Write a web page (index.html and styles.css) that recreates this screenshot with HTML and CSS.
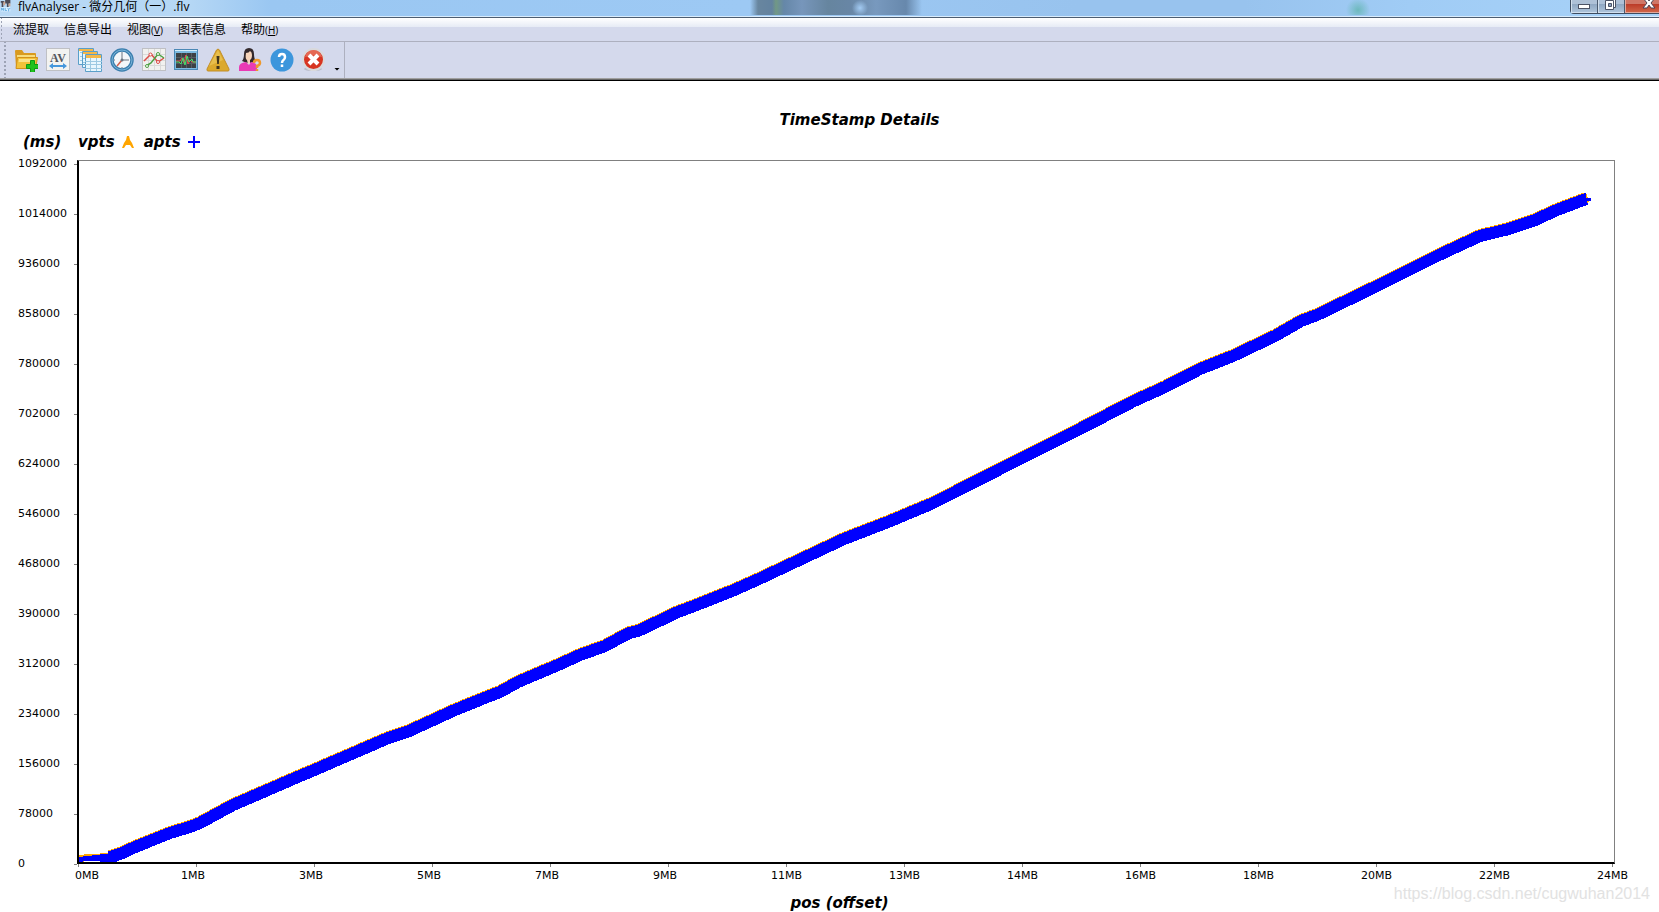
FILE: index.html
```html
<!DOCTYPE html>
<html lang="zh-CN">
<head>
<meta charset="utf-8">
<title>flvAnalyser</title>
<link rel="stylesheet" href="styles.css">
</head>
<body>
<header class="titlebar">
  <svg class="app-icon" viewBox="0 0 12 16" aria-hidden="true"><path fill="#4b4b55" d="M0 1h4v2H0zM5 0h6v4H9v5H7V4H5zM1 3h2v5H1z"/><path fill="#cfa58d" d="M3 2h2v4H3zM9 4h2v3H9z"/><path fill="#d8efff" d="M0 8h11v5H0z"/><path stroke="#5ba7dc" fill="none" d="M1 12V9l2 3V9M5 9v3h2M8 9l1 2 2-2M9 11v2"/></svg>
  <h1 class="title">flvAnalyser - 微分几何（一）.flv</h1>
  <div class="glass" aria-hidden="true"></div>
  <div class="window-buttons">
    <button class="wb" aria-label="Minimize"><svg width="14" height="14"><rect x="1.500" y="4.500" width="11" height="4" fill="#fff" stroke="#4c5365"/></svg></button>
    <button class="wb" aria-label="Restore"><svg width="14" height="14"><path d="M4.500-1.500h7v9h-7z" fill="#fff" stroke="#4c5365"/><path d="M1.500.5h8v9h-8z" fill="#fff" stroke="#4c5365"/><path d="M4.500 3.500h3v3h-3z" fill="#8aa0be" stroke="#4c5365"/></svg></button>
    <button class="wb wb-close" aria-label="Close"><svg width="14" height="14"><path d="M1-2h4l2 3 2-3h4L9 3l4 5H9L7 5 5 8H1l4-5z" fill="#fff" stroke="#4c4555"/></svg></button>
  </div>
</header>
<nav class="menubar">
  <button>流提取</button>
  <button>信息导出</button>
  <button>视图<span class="key">(<u>V</u>)</span></button>
  <button>图表信息</button>
  <button>帮助<span class="key">(<u>H</u>)</span></button>
</nav>
<div class="toolbar">
  <div class="tools">
    <button aria-label="Open"><svg viewBox="0 0 24 24"><path fill="#d99a1e" d="M1 3q0-1 1-1h6l2 3h11q1 0 1 1v14H2z"/><path fill="#f7dd7c" d="M3 7h18v3H3z"/><path fill="#f2c23a" stroke="#d3921a" d="M3.500 9.500h20l-2 11H2z"/><path fill="#fbe28a" d="M5 11h16l-.5 3H4.500z"/><path fill="#1fc21d" stroke="#0c9a14" d="M16.500 12.500h4v4h4v4h-4v4h-4v-4h-4v-4h4z"/></svg></button>
    <button aria-label="Audio and video"><svg viewBox="0 0 24 24"><rect x=".5" y=".5" width="23" height="22" fill="#f3f3f1" stroke="#bfc0c4"/><text x="12" y="14" text-anchor="middle" class="av">AV</text><path fill="none" stroke="#4597dc" d="M5 17.500h14M5 18.500h14"/><path fill="#4597dc" d="M3 18l4-3v6zM21 18l-4-3v6z"/></svg></button>
    <button aria-label="Tables"><svg viewBox="0 0 24 24"><g stroke="#5a9fc9"><path fill="#e7f6fd" d="M.5.5h15v16H.5zM4.500 3.500h15v16h-15z"/><path fill="#e7f6fd" d="M7.500 6.500h16v17h-16z"/><path d="M7 13.500h17M7 16.500h17M7 20.500h17M12.500 7v16M18.500 7v16M2 4.500h2M2 8.500h2M2 12.500h2M5 10.500h2M5 14.500h2" stroke="#9cc9e2"/></g><path fill="#f3b749" d="M1 1h14v2H1zM5 4h14v2H5zM8 7h15v3H8z"/></svg></button>
    <button aria-label="Timestamps"><svg viewBox="0 0 24 24"><circle cx="12" cy="12" r="10" fill="#f4f7fa" stroke="#3c7fae" stroke-width="3.500"/><circle cx="12" cy="12" r="10" fill="none" stroke="#7ab5da"/><path stroke="#6b7480" fill="none" d="M12 4v8h7M12 19v1M4 12h1"/><path stroke="#d2604d" stroke-width="1.500" d="M12 12l-5 6"/><circle cx="12" cy="12" r="1.500" fill="#6b7480"/></svg></button>
    <button aria-label="Chart"><svg viewBox="0 0 24 24"><rect x=".5" y=".5" width="23" height="22" fill="#f1f1ef" stroke="#bfc0c4"/><path stroke="#dadada" d="M6.500 1v21M12.500 1v21M18.500 1v21M1 6.500h22M1 12.500h22M1 17.500h22"/><path fill="none" stroke="#dc4d48" stroke-width="1.500" d="M2 13l7-7 7 8 6-4"/><path fill="none" stroke="#4ea143" stroke-width="1.500" d="M4 18l5-3 7-9 6 4"/><g fill="#fff" stroke="#dc4d48"><circle cx="8.500" cy="6.500" r="1.500"/><circle cx="16" cy="14" r="1.500"/></g><g fill="#fff" stroke="#4ea143"><circle cx="5" cy="18" r="1.500"/><circle cx="16" cy="6" r="1.500"/></g></svg></button>
    <button aria-label="Monitor"><svg viewBox="0 0 24 24"><rect x=".5" y="1.500" width="23" height="20" fill="#7cb9df" stroke="#4b88b5"/><path fill="#d5eefb" d="M1 2h22v1H1z"/><path fill="#3c4044" d="M2 5h20v15H2z"/><path stroke="#555c60" d="M7.500 5v15M12.500 5v15M17.500 5v15M2 9.500h20M2 15.500h20"/><path fill="none" stroke="#e94d50" d="M2 13h4l2-3 2 5 2-8 2 9 2-4 2 2h4"/><path fill="none" stroke="#45e06a" d="M2 14h3l2 2 2-6 2 7 2-9 2 6 3-3 1 3h3"/></svg></button>
    <button aria-label="Warnings"><svg viewBox="0 0 24 24"><path fill="#dba92d" stroke="#c28e27" d="M10.500 2q1.500-2 3 0l9.500 19q.5 2-1 2H2q-1.500 0-1-2z"/><path fill="#efcd61" d="M12 2l5 10-14 6z" opacity=".6"/><path fill="#41351b" d="M10.500 8h3l-.7 8h-1.600zM10.500 18h3v3h-3z"/></svg></button>
    <button aria-label="User help"><svg viewBox="0 0 24 24"><path fill="#33292c" d="M4 13q2-2 2-7 0-6 5-6t5 6q0 5 2 7-4 2-7 2t-7-2z"/><path fill="#f6d4ba" d="M8 5q3 0 4-2 2 1 2 4 0 4-2 5v3l-2 1-1-4q-2-1-1-7z"/><path fill="#e93bb5" d="M1 23v-4q0-4 7-5l3 3 2-3q6 1 6 5v4z"/><path fill="none" stroke="#ef982c" stroke-width="2.500" d="M16 15q0-3 3-3t3 3q0 2-3 3v2M19 21v2"/></svg></button>
    <button aria-label="Help"><svg viewBox="0 0 24 24"><circle cx="12" cy="12" r="11.500" fill="#3c96dc"/><path fill="none" stroke="#fff" stroke-width="2.500" d="M9 9q0-3 3-3t3 3q0 2-1.500 3T12 15M12 16.500V19"/></svg></button>
    <button aria-label="Exit"><svg viewBox="0 0 24 24"><ellipse cx="11" cy="21" rx="9" ry="2" fill="#b9bcca"/><circle cx="11.500" cy="11.500" r="10.500" fill="#d73522" stroke="#d9d9db" stroke-width="2"/><path fill="#ef8a75" d="M3 9q2-7 8.500-7T20 9q-8-3-17 0z" opacity=".6"/><path stroke="#fff" stroke-width="4" d="M7 7l9 9M16 7l-9 9"/></svg></button>
    <button class="more" aria-label="More"></button>
  </div>
</div>
<main class="chart">
  <h2 class="chart-title">TimeStamp Details</h2>
  <div class="legend">
    <span class="unit">(ms)</span>
    <span>vpts</span><svg width="12" height="12"><path fill="orange" d="M5 0h2l1 4 2 3 2 5h-2L8 9H4l-2 3H0l2-5 2-3z"/></svg>
    <span>apts</span><svg width="12" height="12"><path fill="#00f" d="M5 0h2v5h5v2H7v5H5V7H0V5h5z"/></svg>
  </div>
  <div class="graph">
    <ol class="y-axis"><li>1092000</li><li>1014000</li><li>936000</li><li>858000</li><li>780000</li><li>702000</li><li>624000</li><li>546000</li><li>468000</li><li>390000</li><li>312000</li><li>234000</li><li>156000</li><li>78000</li><li>0</li></ol>
    <div class="plot">
      <svg class="series" viewBox="79 161 1535 701" preserveAspectRatio="none" role="img" aria-label="vpts and apts by file offset">
        <defs><polyline id="line" points="110,857 120,854 133,848 150,841 170,833 190,827 200,823 233,805 247,799 277,786 300,776 312,771 349,755 386,739 407,732 455,710 487,697 500,692 518,682 558,665 580,655 605,646 629,633 638,631 678,612 694,606 732,591 759,579 844,539 888,522 931,504 953,493 1004,467 1062,438 1080,429 1134,401 1165,387 1200,369 1233,356 1275,336 1301,321 1317,315 1375,287 1439,255 1480,236 1509,229 1533,221 1557,210 1586,199"/></defs>
        <use href="#line" class="vpts" y="-1"/>
        <path class="vpts-tail" d="M79 855h5v-1h16v-1h8v-3h8v8H79zM80 861h4v1h-4zM1584 193l3 1v3l3 3-3 4-4-1z"/>
        <use href="#line" class="apts"/>
        <path class="apts-tail" d="M79 857h4v-1h9v-1h8v-1h8v-3h9v11h-17v-1H83v1h-4zM1584 193h2v5h5v3h-5l-3 3z"/>
      </svg>
    </div>
    <ol class="x-axis"><li>0MB</li><li>1MB</li><li>3MB</li><li>5MB</li><li>7MB</li><li>9MB</li><li>11MB</li><li>13MB</li><li>14MB</li><li>16MB</li><li>18MB</li><li>20MB</li><li>22MB</li><li>24MB</li></ol>
  </div>
  <p class="x-title">pos (offset)</p>
  <span class="watermark">https://blog.csdn.net/cugwuhan2014</span>
</main>
</body>
</html>
```
FILE: styles.css
```css
* { box-sizing: border-box; }
body {
  margin: 0;
  min-height: 100vh;
  display: flex;
  flex-direction: column;
  background: #fff;
  color: #000;
  font: 12px "Open Sans", "Noto Sans CJK SC", sans-serif;
  overflow: hidden;
}
h1, h2, p, ol { margin: 0; padding: 0; }
ol { list-style: none; }
button { padding: 0; border: 0; background: none; color: inherit; font: inherit; }

.titlebar {
  position: relative;
  display: flex;
  height: 18px;
  border-bottom: 1px solid #4d5d70;
  box-shadow: inset 0 -1px #d9ecfc;
  background: linear-gradient(90deg, #b9d9f4, #b5d7f5 190px, #9ac7f2 270px, #9dc9f4 45%, #98c3ee 65%, #98c3ee 75%, #a0ccf5 85%, #a8d2f8);
}
.app-icon { width: 12px; height: 14px; }
.title { padding-left: 6px; font-size: 12px; font-weight: 400; line-height: 14px; white-space: pre; }
.glass {
  position: absolute;
  inset: 0 0 2px;
  background:
    radial-gradient(circle at 50% 50%, #a3cbf3 0, #a3cbf300 8px) 852px 0 / 16px 16px no-repeat,
    linear-gradient(90deg, #6c91b300, #68869f 8px, #63829f 22px, #719885 26px, #6587a8 34px, #7796bb 52px, #66859f 78px, #6886a5 100px, #7899be 126px, #6788ac 156px, #6c91b300) 750px 0 / 172px 16px no-repeat,
    radial-gradient(circle at 50% 50%, #6db9bd 0, #6db9bd00 12px) 1346px 0 / 24px 20px no-repeat;
}
.window-buttons {
  position: relative;
  display: flex;
  height: 14px;
  margin-left: auto;
  border: solid #3d4c60;
  border-width: 0 0 1px 1px;
  border-radius: 0 0 0 4px;
}
.wb {
  width: 27px;
  height: 13px;
  border-right: 1px solid #4b5a6e;
  box-shadow: inset 1px -1px #d2e0ee;
  background: linear-gradient(#aec1d7 4px, #8ea6c1 4px, #b0c6dc);
  overflow: hidden;
}
.wb svg { display: block; margin: 0 auto; }
.wb-close { width: 34px; border: 0; padding-left: 14px; box-shadow: inset 1px -1px #e3a99c; background: linear-gradient(#cf7767 4px, #bb3a27 4px, #d2694b); }

.menubar {
  display: flex;
  gap: 15px;
  height: 24px;
  padding-left: 13px;
  border-bottom: 1px solid #adb0bf;
  background:
    radial-gradient(circle, #9da3b5 1px, transparent 1px) 0 2px / 3px 4px repeat-y,
    linear-gradient(#fff, #e6ebf5 9px, #d4d9ec 9px);
}
.menubar button { padding-top: 1px; line-height: 22px; }
.key { font-size: 10px; }
.toolbar {
  height: 39px;
  border-bottom: 1px solid #000;
  box-shadow: inset 0 -1px #686868, inset 0 -2px #a0a0a0;
  background: #d4d9ec;
}
.tools {
  display: flex;
  gap: 8px;
  align-items: center;
  width: 345px;
  height: 36px;
  padding-left: 14px;
  border-right: 1px solid #adb0bf;
  background: radial-gradient(circle, #9da3b5 1px, transparent 1px) 3px 2px / 4px 4px repeat-y;
}
.tools button { width: 24px; height: 24px; }
.tools svg { display: block; width: 24px; height: 24px; }
.av { font: bold 12px "Liberation Serif", serif; fill: #54575d; }
.tools .more { width: 6px; height: 3px; margin-top: 18px; background: #000; clip-path: polygon(0 0, 100% 0, 50% 100%); }

.chart {
  position: relative;
  flex: 1;
  display: flex;
  flex-direction: column;
  font-family: "DejaVu Sans", sans-serif;
}
.chart-title, .legend, .x-title { font-size: 15px; font-style: italic; font-weight: 700; line-height: 20px; }
.chart-title { padding: 29px 0 0 60px; text-align: center; }
.legend { display: flex; align-items: center; gap: 7px; height: 24px; padding-left: 23px; }
.legend .unit { width: 48px; }
.legend svg { margin-right: 3px; }
.graph {
  flex: 1;
  display: grid;
  grid-template: 1fr 29px / 77px 1fr;
  padding: 6px 44px 0 0;
  font-size: 11px;
}
.y-axis { display: flex; flex-direction: column; justify-content: space-between; margin: -3px 0 -7px; padding-left: 18px; line-height: 14px; }
.y-axis li { display: flex; justify-content: space-between; align-items: center; height: 14px; }
.y-axis li::after { content: ""; width: 3px; height: 1px; background: #808080; }
.plot { display: flex; min-height: 0; border: solid #000; border-width: 1px 1px 2px 2px; border-top-color: #808080; border-right-color: #808080; }
.series { flex: 1; width: 100%; min-width: 0; height: 100%; overflow: visible; shape-rendering: crispEdges; }
.vpts, .apts { fill: none; stroke-width: 12; stroke-linejoin: round; }
.vpts { stroke: orange; }
.apts { stroke: #00f; }
.vpts-tail { fill: orange; }
.apts-tail { fill: #00f; }
.x-axis { grid-column: 2; display: grid; grid-template-columns: repeat(13, minmax(0, 1fr)) 0; margin: 0 3px 0 1px; line-height: 14px; }
.x-axis li { margin-left: -15px; white-space: nowrap; }
.x-axis li::before { content: ""; display: block; width: 1px; height: 3px; margin: 0 0 2px 15px; background: #808080; }
.x-axis li:first-child { margin-left: -3px; }
.x-axis li:first-child::before { margin-left: 3px; }
.x-title { padding-left: 20px; text-align: center; }
.watermark { position: absolute; right: 9px; bottom: 9px; color: #e2e2e2; font: 16px/20px "Liberation Sans", sans-serif; }
```
